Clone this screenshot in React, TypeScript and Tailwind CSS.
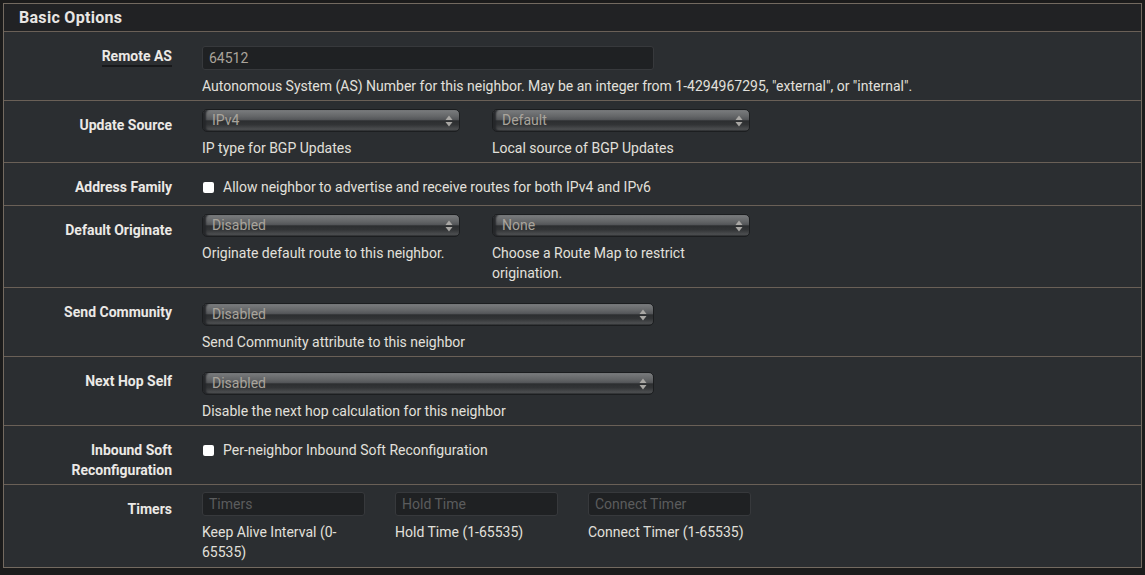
import React from 'react';

const Arrows: React.FC = () => (
  <svg width="8" height="12" viewBox="0 0 8 12" className="shrink-0">
    <path d="M4 0.5 L7.5 5 L0.5 5 Z" fill="#a9a7a4" />
    <path d="M4 11.5 L7.5 7 L0.5 7 Z" fill="#a9a7a4" />
  </svg>
);

const Select: React.FC<{ value: string; width: string }> = ({ value, width }) => (
  <div
    className={`${width} h-[23px] rounded-[5px] border border-[#1c1e20] bg-[linear-gradient(180deg,#7a7c7e_0%,#646668_30%,#55575a_45%,#2c2e30_52%,#323436_70%,#4c4e50_92%,#2a2c2e_100%)] shadow-[inset_4px_0_2px_-1px_#25272a] flex items-center justify-between pl-[9px] pr-[6px]`}
  >
    <span className="text-[14px] text-[#a9a49c] leading-none -mt-[2px]">{value}</span>
    <Arrows />
  </div>
);

const Input: React.FC<{ value?: string; placeholder?: string; width: string }> = ({ value, placeholder, width }) => (
  <div className={`${width} h-[24px] rounded-[3px] border border-[#37393c] bg-[#1f2123] flex items-center px-[6px]`}>
    {value ? (
      <span className="text-[14px] text-[#aaa49b]">{value}</span>
    ) : (
      <span className="text-[14px] text-[#5b5c5d]">{placeholder}</span>
    )}
  </div>
);

const Check: React.FC<{ label: string }> = ({ label }) => (
  <div className="flex items-center gap-[9px] h-[20px]">
    <span className="w-[11px] h-[11px] ml-[1px] rounded-[2px] bg-white" />
    <span>{label}</span>
  </div>
);

const Help: React.FC<{ children: React.ReactNode }> = ({ children }) => (
  <p className="mt-[6px] leading-[20px]">{children}</p>
);

const Row: React.FC<{ label: React.ReactNode; pt: string; pb?: string; children: React.ReactNode }> = ({
  label,
  pt,
  pb = 'pb-[4px]',
  children,
}) => (
  <div className={`flex border-t border-[#6a6057] ${pb}`}>
    <div className="w-[168px] shrink-0 pt-[14px] text-right font-bold leading-[20px] text-[#ebe9e6]">{label}</div>
    <div className={`pl-[30px] ${pt}`}>{children}</div>
  </div>
);

export default function App() {
  return (
    <div className="min-h-[575px] bg-[#1b1b1b] pt-[3px] px-[3px] font-['Roboto',sans-serif] text-[14px] text-[#e2e0dc]">
      <div className="border border-[#736a60] bg-[#2b2e31]">
        <div className="h-[27px] bg-[#212224] flex items-center pl-[15px]">
          <h2 className="text-[16px] font-bold tracking-[0.3px] text-[#e8e6e3]">Basic Options</h2>
        </div>

        <Row
          label={<span className="border-b-2 border-[#17181a] pb-[1px]">Remote AS</span>}
          pt="pt-[14px]"
        >
          <Input value="64512" width="w-[452px]" />
          <Help>
            Autonomous System (AS) Number for this neighbor. May be an integer from 1-4294967295, "external", or
            "internal".
          </Help>
        </Row>

        <Row label="Update Source" pt="pt-[8px]">
          <div className="flex gap-[32px]">
            <div className="w-[258px]">
              <Select value="IPv4" width="w-[258px]" />
              <Help>IP type for BGP Updates</Help>
            </div>
            <div className="w-[258px]">
              <Select value="Default" width="w-[258px]" />
              <Help>Local source of BGP Updates</Help>
            </div>
          </div>
        </Row>

        <Row label="Address Family" pt="pt-[14px]" pb="pb-[8px]">
          <Check label="Allow neighbor to advertise and receive routes for both IPv4 and IPv6" />
        </Row>

        <Row label="Default Originate" pt="pt-[8px]">
          <div className="flex gap-[32px]">
            <div className="w-[258px]">
              <Select value="Disabled" width="w-[258px]" />
              <Help>Originate default route to this neighbor.</Help>
            </div>
            <div className="w-[258px]">
              <Select value="None" width="w-[258px]" />
              <Help>Choose a Route Map to restrict origination.</Help>
            </div>
          </div>
        </Row>

        <Row label="Send Community" pt="pt-[15px]">
          <Select value="Disabled" width="w-[452px]" />
          <Help>Send Community attribute to this neighbor</Help>
        </Row>

        <Row label="Next Hop Self" pt="pt-[15px]">
          <Select value="Disabled" width="w-[452px]" />
          <Help>Disable the next hop calculation for this neighbor</Help>
        </Row>

        <Row
          label={
            <>
              Inbound Soft
              <br />
              Reconfiguration
            </>
          }
          pt="pt-[14px]"
        >
          <Check label="Per-neighbor Inbound Soft Reconfiguration" />
        </Row>

        <Row label="Timers" pt="pt-[7px]" pb="pb-[5px]">
          <div className="flex gap-[30px]">
            <div className="w-[163px]">
              <Input placeholder="Timers" width="w-[163px]" />
              <Help>Keep Alive Interval (0-65535)</Help>
            </div>
            <div className="w-[163px]">
              <Input placeholder="Hold Time" width="w-[163px]" />
              <Help>Hold Time (1-65535)</Help>
            </div>
            <div className="w-[163px]">
              <Input placeholder="Connect Timer" width="w-[163px]" />
              <Help>Connect Timer (1-65535)</Help>
            </div>
          </div>
        </Row>
      </div>
    </div>
  );
}
